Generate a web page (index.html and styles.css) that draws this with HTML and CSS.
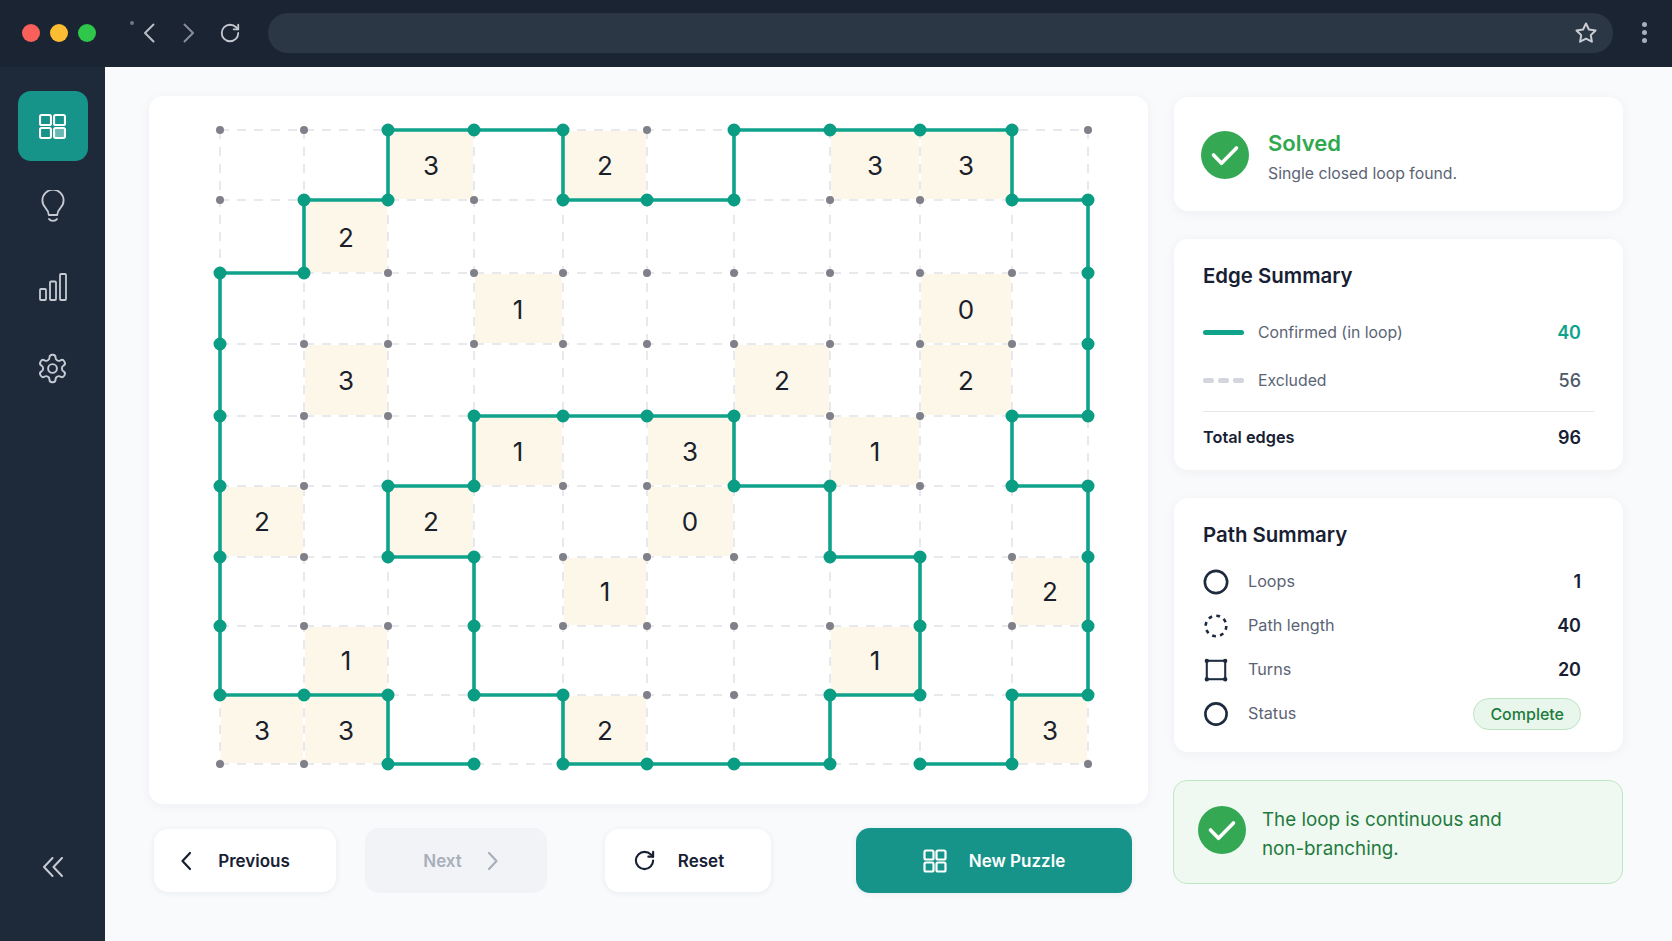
FILE: index.html
```html
<!DOCTYPE html>
<html lang="en">
<head>
    <meta charset="UTF-8">
    <meta name="viewport" content="width=device-width, initial-scale=1.0">
    <title>Loop Puzzle</title>
    <link rel="stylesheet" href="styles.css">
</head>
<body>
<div class="app">
    <!-- Browser chrome -->
    <header class="topbar">
        <div class="lights">
            <span class="light light-red"></span>
            <span class="light light-yellow"></span>
            <span class="light light-green"></span>
        </div>
        <span class="speck"></span>
        <svg class="chrome-icon chevron-back" viewBox="0 0 12 20"><path d="M10.5 1.5 2 10l8.5 8.5"/></svg>
        <svg class="chrome-icon chevron-forward" viewBox="0 0 12 20"><path d="M1.5 1.5 10 10l-8.5 8.5"/></svg>
        <svg class="chrome-icon reload" viewBox="0 0 24 24"><path d="M21 12a9 9 0 1 1-9-9c2.52 0 4.93 1 6.74 2.74L21 8"/><path d="M21 3v5h-5"/></svg>
        <div class="address">
            <svg class="chrome-icon star" viewBox="0 0 24 24"><path d="M12 2.5l2.95 6 6.6.95-4.78 4.65 1.13 6.57L12 17.57l-5.9 3.1 1.13-6.57L2.45 9.45l6.6-.95z"/></svg>
        </div>
        <div class="kebab"><span></span><span></span><span></span></div>
    </header>

    <div class="workspace">
        <!-- Side nav -->
        <nav class="sidebar">
            <a class="nav-item active">
                <svg viewBox="0 0 26 24" class="nav-grid">
                    <rect x="1" y="1" width="10.5" height="9.5" rx="1.5"/>
                    <rect x="14.5" y="1" width="10.5" height="9.5" rx="1.5"/>
                    <rect x="1" y="13.5" width="10.5" height="9.5" rx="1.5"/>
                    <rect x="14.5" y="13.5" width="10.5" height="9.5" rx="1.5" class="lit"/>
                </svg>
            </a>
            <a class="nav-item nav-bulb">
                <svg viewBox="0 0 24 33" class="nav-bulb-icon">
                    <path d="M7.8 25c0-3-1-4.6-3.3-7.2a10.6 10.6 0 1 1 15 0c-2.3 2.6-3.3 4.2-3.3 7.2z"/>
                    <path d="M8 29c1.5 2.4 6.5 2.4 8 0"/>
                </svg>
            </a>
            <a class="nav-item nav-bars">
                <svg viewBox="0 0 28 28" class="nav-bars-icon">
                    <rect x="1" y="16" width="6" height="11" rx="1"/>
                    <rect x="11" y="8.5" width="6" height="18.5" rx="1"/>
                    <rect x="21" y="1" width="6" height="26" rx="1"/>
                </svg>
            </a>
            <a class="nav-item nav-gear">
                <svg viewBox="0 0 24 24" class="nav-gear-icon">
                    <path d="M12.22 2h-.44a2 2 0 0 0-2 2v.18a2 2 0 0 1-1 1.73l-.43.25a2 2 0 0 1-2 0l-.15-.08a2 2 0 0 0-2.73.73l-.22.38a2 2 0 0 0 .73 2.73l.15.1a2 2 0 0 1 1 1.72v.51a2 2 0 0 1-1 1.74l-.15.09a2 2 0 0 0-.73 2.73l.22.38a2 2 0 0 0 2.73.73l.15-.08a2 2 0 0 1 2 0l.43.25a2 2 0 0 1 1 1.73V20a2 2 0 0 0 2 2h.44a2 2 0 0 0 2-2v-.18a2 2 0 0 1 1-1.73l.43-.25a2 2 0 0 1 2 0l.15.08a2 2 0 0 0 2.73-.73l.22-.39a2 2 0 0 0-.73-2.73l-.15-.08a2 2 0 0 1-1-1.74v-.5a2 2 0 0 1 1-1.74l.15-.09a2 2 0 0 0 .73-2.73l-.22-.38a2 2 0 0 0-2.73-.73l-.15.08a2 2 0 0 1-2 0l-.43-.25a2 2 0 0 1-1-1.73V4a2 2 0 0 0-2-2z"/>
                    <circle cx="12" cy="12" r="3.2"/>
                </svg>
            </a>
            <a class="collapse">
                <svg viewBox="0 0 22 20"><path d="M10.5 1 2 10l8.5 9"/><path d="M20 1l-8.5 9 8.5 9"/></svg>
            </a>
        </nav>

        <main class="main">
            <section class="play">
                <div class="card board">
                    <svg class="board-svg" viewBox="149 96 999 708">
                        <!-- clue cells -->
                        <g class="clue-cells">
                            <rect x="389" y="131" width="84" height="68"/><rect x="564" y="131" width="82" height="68"/><rect x="831" y="131" width="88" height="68"/><rect x="921" y="131" width="90" height="68"/>
                            <rect x="305" y="201" width="82" height="71"/>
                            <rect x="475" y="274" width="87" height="69"/><rect x="921" y="274" width="90" height="69"/>
                            <rect x="305" y="345" width="82" height="70"/><rect x="735" y="345" width="94" height="70"/><rect x="921" y="345" width="90" height="70"/>
                            <rect x="475" y="417" width="87" height="68"/><rect x="648" y="417" width="85" height="68"/><rect x="831" y="417" width="88" height="68"/>
                            <rect x="221" y="487" width="82" height="69"/><rect x="389" y="487" width="84" height="69"/><rect x="648" y="487" width="85" height="69"/>
                            <rect x="564" y="558" width="82" height="67"/><rect x="1013" y="558" width="74" height="67"/>
                            <rect x="305" y="627" width="82" height="67"/><rect x="831" y="627" width="88" height="67"/>
                            <rect x="221" y="696" width="82" height="67"/><rect x="305" y="696" width="82" height="67"/><rect x="564" y="696" width="82" height="67"/><rect x="1013" y="696" width="74" height="67"/>
                        </g>
                        <!-- excluded edges -->
                        <path class="edge-off" d="M220 130H1088M220 200H1088M220 273H1088M220 344H1088M220 416H1088M220 486H1088M220 557H1088M220 626H1088M220 695H1088M220 764H1088M220 130V764M304 130V764M388 130V764M474 130V764M563 130V764M647 130V764M734 130V764M830 130V764M920 130V764M1012 130V764M1088 130V764"/>
                        <!-- loop edges -->
                        <path class="edge-on" d="M388 130H563V200H734V130H1012V200H1088V416H1012V486H1088V695H1012V764H920"/>
                        <path class="edge-on" d="M830 764V695H920V557H830V486H734V416H474V486H388V557H474V695H563V764Z"/>
                        <path class="edge-on" d="M388 130V200H304V273H220V695H388V764H474"/>
                        <!-- vertices -->
                        <path class="dots-off" d="M220 130h.01M304 130h.01M647 130h.01M1088 130h.01
                            M220 200h.01M474 200h.01M830 200h.01M920 200h.01
                            M388 273h.01M474 273h.01M563 273h.01M647 273h.01M734 273h.01M830 273h.01M920 273h.01M1012 273h.01
                            M304 344h.01M388 344h.01M474 344h.01M563 344h.01M647 344h.01M734 344h.01M830 344h.01M920 344h.01M1012 344h.01
                            M304 416h.01M388 416h.01M830 416h.01M920 416h.01
                            M304 486h.01M563 486h.01M647 486h.01M920 486h.01
                            M304 557h.01M563 557h.01M647 557h.01M734 557h.01M1012 557h.01
                            M304 626h.01M388 626h.01M563 626h.01M647 626h.01M734 626h.01M830 626h.01M1012 626h.01
                            M647 695h.01M734 695h.01
                            M220 764h.01M304 764h.01M1088 764h.01"/>
                        <path class="dots-on" d="M388 130h.01M474 130h.01M563 130h.01M734 130h.01M830 130h.01M920 130h.01M1012 130h.01
                            M304 200h.01M388 200h.01M563 200h.01M647 200h.01M734 200h.01M1012 200h.01M1088 200h.01
                            M220 273h.01M304 273h.01M1088 273h.01
                            M220 344h.01M1088 344h.01
                            M220 416h.01M474 416h.01M563 416h.01M647 416h.01M734 416h.01M1012 416h.01M1088 416h.01
                            M220 486h.01M388 486h.01M474 486h.01M734 486h.01M830 486h.01M1012 486h.01M1088 486h.01
                            M220 557h.01M388 557h.01M474 557h.01M830 557h.01M920 557h.01M1088 557h.01
                            M220 626h.01M474 626h.01M920 626h.01M1088 626h.01
                            M220 695h.01M304 695h.01M388 695h.01M474 695h.01M563 695h.01M830 695h.01M920 695h.01M1012 695h.01M1088 695h.01
                            M388 764h.01M474 764h.01M563 764h.01M647 764h.01M734 764h.01M830 764h.01M920 764h.01M1012 764h.01"/>
                        <!-- clue numbers -->
                        <g class="clues">
                            <text x="431" y="175">3</text><text x="605" y="175">2</text><text x="875" y="175">3</text><text x="966" y="175">3</text>
                            <text x="346" y="247">2</text>
                            <text x="518" y="319">1</text><text x="966" y="319">0</text>
                            <text x="346" y="390">3</text><text x="782" y="390">2</text><text x="966" y="390">2</text>
                            <text x="518" y="461">1</text><text x="690" y="461">3</text><text x="875" y="461">1</text>
                            <text x="262" y="531">2</text><text x="431" y="531">2</text><text x="690" y="531">0</text>
                            <text x="605" y="601">1</text><text x="1050" y="601">2</text>
                            <text x="346" y="670">1</text><text x="875" y="670">1</text>
                            <text x="262" y="740">3</text><text x="346" y="740">3</text><text x="605" y="740">2</text><text x="1050" y="740">3</text>
                        </g>
                    </svg>
                </div>

                <div class="actions">
                    <button class="btn btn-prev">
                        <svg viewBox="0 0 12 20" class="btn-chevron"><path d="M10 2 2.5 10l7.5 8"/></svg>
                        Previous
                    </button>
                    <button class="btn btn-next" disabled>
                        Next
                        <svg viewBox="0 0 12 20" class="btn-chevron"><path d="M2 2l7.5 8-7.5 8"/></svg>
                    </button>
                    <button class="btn btn-reset">
                        <svg viewBox="0 0 24 24" class="btn-reload"><path d="M21 12a9 9 0 1 1-9-9c2.52 0 4.93 1 6.74 2.74L21 8"/><path d="M21 3v5h-5"/></svg>
                        Reset
                    </button>
                    <button class="btn btn-new">
                        <svg viewBox="0 0 24 24" class="btn-grid">
                            <rect x="1.5" y="1.5" width="9" height="9" rx="1.5"/>
                            <rect x="13.5" y="1.5" width="9" height="9" rx="1.5"/>
                            <rect x="1.5" y="13.5" width="9" height="9" rx="1.5"/>
                            <rect x="13.5" y="13.5" width="9" height="9" rx="1.5"/>
                        </svg>
                        New Puzzle
                    </button>
                </div>
            </section>

            <aside class="side">
                <div class="card solved">
                    <svg class="check" viewBox="0 0 48 48"><circle cx="24" cy="24" r="24"/><path d="M12.5 24l8 8.3L35.5 17"/></svg>
                    <div class="solved-text">
                        <div class="solved-title">Solved</div>
                        <div class="solved-sub">Single closed loop found.</div>
                    </div>
                </div>

                <div class="card summary edge-summary">
                    <h2>Edge Summary</h2>
                    <div class="edge-row">
                        <span class="legend legend-on"></span>
                        <span class="edge-label">Confirmed (in loop)</span>
                        <span class="edge-value teal">40</span>
                    </div>
                    <div class="edge-row">
                        <span class="legend legend-off"><i></i><i></i><i></i></span>
                        <span class="edge-label">Excluded</span>
                        <span class="edge-value">56</span>
                    </div>
                    <div class="total-row">
                        <span>Total edges</span>
                        <span class="total-value">96</span>
                    </div>
                </div>

                <div class="card summary path-summary">
                    <h2>Path Summary</h2>
                    <div class="path-row">
                        <svg class="path-icon" viewBox="0 0 24 24"><circle cx="12" cy="12" r="10.3"/></svg>
                        <span class="path-label">Loops</span>
                        <span class="path-value">1</span>
                    </div>
                    <div class="path-row">
                        <svg class="path-icon" viewBox="0 0 24 24"><circle class="dashed" cx="12" cy="12" r="9.5"/></svg>
                        <span class="path-label">Path length</span>
                        <span class="path-value">40</span>
                    </div>
                    <div class="path-row">
                        <svg class="path-icon" viewBox="0 0 24 24">
                            <rect class="turns" x="3.5" y="3.5" width="17" height="17"/>
                            <path class="corners" d="M3.5 3.5h.01M20.5 3.5h.01M3.5 20.5h.01M20.5 20.5h.01"/>
                        </svg>
                        <span class="path-label">Turns</span>
                        <span class="path-value">20</span>
                    </div>
                    <div class="path-row">
                        <svg class="path-icon" viewBox="0 0 24 24"><circle cx="12" cy="12" r="9.8"/></svg>
                        <span class="path-label">Status</span>
                        <span class="pill">Complete</span>
                    </div>
                </div>

                <div class="note">
                    <svg class="check" viewBox="0 0 48 48"><circle cx="24" cy="24" r="24"/><path d="M12.5 24l8 8.3L35.5 17"/></svg>
                    <p>The loop is continuous and<br>non-branching.</p>
                </div>
            </aside>
        </main>
    </div>
</div>
</body>
</html>
```

FILE: styles.css
```css
* {
    box-sizing: border-box;
}

body {
    margin: 0;
    font-family: Inter, "Noto Sans", sans-serif;
    background: #f8fafc;
    color: #172033;
    overflow: hidden;
}

.app {
    display: grid;
    grid-template-rows: 67px 1fr;
    height: 100vh;
}

/* Browser chrome */
.topbar {
    display: flex;
    align-items: center;
    background: #1a2433;
    padding: 0 0 2px 22px;
}

.lights {
    display: flex;
    gap: 10px;
}

.light {
    width: 18px;
    height: 18px;
    border-radius: 50%;
}

.light-red { background: #f9605a; }
.light-yellow { background: #fdbd33; }
.light-green { background: #2fc74a; }

.speck {
    width: 4px;
    height: 4px;
    border-radius: 50%;
    background: #6f7682;
    margin: -20px 0 0 34px;
}

.chrome-icon {
    fill: none;
    stroke-width: 2;
    stroke-linecap: round;
    stroke-linejoin: round;
    flex: none;
}

.chevron-back {
    width: 12px;
    height: 20px;
    stroke: #b9bec6;
    margin-left: 9px;
}

.chevron-forward {
    width: 12px;
    height: 20px;
    stroke: #878e99;
    margin-left: 28px;
}

.reload {
    width: 22px;
    height: 22px;
    stroke: #c4c8ce;
    margin-left: 24px;
}

.address {
    display: flex;
    align-items: center;
    justify-content: flex-end;
    width: 1345px;
    height: 40px;
    margin-left: 27px;
    padding-right: 15px;
    border-radius: 20px;
    background: #2c3746;
}

.star {
    width: 24px;
    height: 24px;
    stroke: #c9ccd2;
}

.kebab {
    display: flex;
    flex-direction: column;
    gap: 3px;
    margin-left: 29px;
}

.kebab span {
    width: 5px;
    height: 5px;
    border-radius: 50%;
    background: #a9afba;
}

.workspace {
    display: flex;
    min-height: 0;
}

/* Side nav */
.sidebar {
    width: 105px;
    flex: none;
    display: flex;
    flex-direction: column;
    align-items: center;
    padding: 24px 0 0;
    background: #1e2a3a;
}

.nav-item {
    width: 70px;
    height: 70px;
    display: flex;
    align-items: center;
    justify-content: center;
    border-radius: 13px;
}

.nav-item svg {
    fill: none;
    stroke: #c5cad3;
    stroke-width: 1.8;
    stroke-linejoin: round;
    stroke-linecap: round;
}

.nav-item.active {
    background: #17948a;
}

.nav-item.active svg {
    stroke: #ffffff;
    stroke-width: 2;
}

.nav-grid {
    width: 27px;
    height: 25px;
}

.nav-grid .lit {
    fill: rgba(255, 255, 255, 0.35);
}

.nav-bulb { margin-top: 10px; }
.nav-bars { margin-top: 11px; }
.nav-gear { margin-top: 11px; }

.nav-bulb-icon {
    width: 24px;
    height: 33px;
}

.nav-bars-icon {
    width: 28px;
    height: 28px;
}

.nav-item .nav-gear-icon {
    width: 33px;
    height: 33px;
    stroke-width: 1.4;
}

.collapse {
    margin-top: auto;
    margin-bottom: 64px;
    display: flex;
}

.collapse svg {
    width: 22px;
    height: 20px;
    fill: none;
    stroke: #c5cad3;
    stroke-width: 2;
    stroke-linecap: round;
    stroke-linejoin: round;
}

/* Main area */
.main {
    flex: 1;
    display: flex;
    gap: 26px;
    padding: 29px 0 0 44px;
}

.card {
    background: #ffffff;
    border-radius: 14px;
    box-shadow: 0 2px 12px rgba(30, 41, 59, 0.05);
}

.play {
    width: 999px;
    flex: none;
}

.board {
    height: 708px;
}

.board-svg {
    display: block;
    width: 999px;
    height: 708px;
}

.clue-cells rect {
    fill: #fdf7ea;
}

.edge-off {
    fill: none;
    stroke: #e0e2e7;
    stroke-width: 1.5;
    stroke-dasharray: 9 8;
}

.edge-on {
    fill: none;
    stroke: #0fa38b;
    stroke-width: 3.6;
    stroke-linejoin: round;
}

.dots-off {
    stroke: #7f8089;
    stroke-width: 8;
    stroke-linecap: round;
}

.dots-on {
    stroke: #0b9c84;
    stroke-width: 13;
    stroke-linecap: round;
}

.clues text {
    font-size: 26px;
    fill: #1a1f2b;
    text-anchor: middle;
}

/* Buttons under the board */
.actions {
    display: flex;
    align-items: center;
    margin-top: 24px;
    padding-left: 5px;
}

.btn {
    display: flex;
    align-items: center;
    justify-content: center;
    height: 63px;
    border: none;
    border-radius: 14px;
    background: #ffffff;
    color: #172033;
    font-family: inherit;
    font-size: 17px;
    font-weight: 600;
    box-shadow: 0 1px 6px rgba(30, 41, 59, 0.07);
}

.btn svg {
    fill: none;
    stroke: currentColor;
    stroke-width: 2.2;
    stroke-linecap: round;
    stroke-linejoin: round;
    flex: none;
}

.btn-chevron {
    width: 12px;
    height: 20px;
}

.btn-prev {
    width: 182px;
    gap: 26px;
    padding-right: 26px;
}

.btn-next {
    width: 182px;
    height: 65px;
    margin-left: 29px;
    gap: 25px;
    padding-left: 16px;
    background: #f2f3f6;
    color: #a8afbc;
    box-shadow: none;
}

.btn-reset {
    width: 166px;
    margin-left: 58px;
    gap: 22px;
    padding-right: 25px;
}

.btn-reload {
    width: 23px;
    height: 23px;
}

.btn-new {
    width: 276px;
    height: 65px;
    margin-left: 85px;
    gap: 22px;
    background: #17948a;
    color: #ffffff;
    font-size: 17px;
}

.btn-grid {
    width: 24px;
    height: 24px;
}

/* Right column */
.side {
    width: 449px;
    flex: none;
    display: flex;
    flex-direction: column;
    gap: 28px;
    padding-top: 1px;
}

.solved {
    display: flex;
    align-items: center;
    gap: 19px;
    height: 114px;
    padding-left: 27px;
}

.check {
    width: 48px;
    height: 48px;
    flex: none;
}

.check circle {
    fill: #34a853;
}

.check path {
    fill: none;
    stroke: #ffffff;
    stroke-width: 3.6;
    stroke-linecap: round;
    stroke-linejoin: round;
}

.solved .check {
    margin-top: 2px;
}

.solved-text {
    margin-top: 6px;
}

.solved-title {
    font-size: 22px;
    font-weight: 600;
    line-height: 28px;
    color: #2fa84f;
}

.solved-sub {
    margin-top: 6px;
    font-size: 15.8px;
    line-height: 22px;
    color: #5b6475;
}

.summary {
    padding: 0 29px;
}

.summary h2 {
    margin: 0;
    font-size: 20.4px;
    font-weight: 600;
    line-height: 24px;
    color: #172033;
}

.edge-summary {
    padding-top: 25px;
    padding-bottom: 8px;
}

.edge-summary h2 {
    margin-bottom: 20px;
}

.edge-row {
    display: flex;
    align-items: center;
    height: 48px;
    padding-right: 13px;
}

.legend {
    display: flex;
    justify-content: space-between;
    width: 41px;
    height: 5px;
    flex: none;
}

.legend-on {
    background: #0fa38b;
    border-radius: 3px;
}

.legend-off i {
    width: 11px;
    height: 5px;
    border-radius: 2px;
    background: #d3d6dc;
}

.edge-label {
    margin-left: 14px;
    font-size: 15.8px;
    color: #5b6475;
}

.edge-value {
    margin-left: auto;
    font-size: 18px;
    font-weight: 500;
    color: #4f5a6b;
}

.edge-value.teal {
    color: #0fa38b;
    font-weight: 600;
}

.total-row {
    display: flex;
    align-items: center;
    justify-content: space-between;
    height: 51px;
    margin-top: 7px;
    padding-right: 13px;
    border-top: 1px solid #e4e7ec;
    font-size: 16.3px;
    font-weight: 600;
}

.total-value {
    font-size: 18px;
}

.path-summary {
    padding-top: 25px;
    padding-bottom: 16px;
}

.path-summary h2 {
    margin-bottom: 12.5px;
}

.path-row {
    display: flex;
    align-items: center;
    height: 44px;
    padding-right: 13px;
}

.path-icon {
    width: 26px;
    height: 26px;
    flex: none;
    fill: none;
    stroke: #1d2b3e;
    stroke-width: 2.4;
}

.path-icon .dashed {
    stroke-dasharray: 3.5 3.96;
}

.path-icon .turns {
    stroke-width: 1.9;
}

.path-icon .corners {
    stroke-width: 4;
    stroke-linecap: round;
}

.path-label {
    margin: -2px 0 0 19px;
    font-size: 16.2px;
    color: #5b6475;
}

.path-value {
    margin-left: auto;
    font-size: 18px;
    font-weight: 600;
}

.pill {
    margin-left: auto;
    display: flex;
    align-items: center;
    height: 32px;
    padding: 0 16px;
    border: 1.5px solid #bde4c5;
    border-radius: 16px;
    background: #e9f6ec;
    color: #1f7a3d;
    font-size: 16px;
    font-weight: 500;
}

.note {
    display: flex;
    align-items: center;
    gap: 16px;
    width: 450px;
    height: 104px;
    margin-left: -1px;
    padding-left: 24px;
    border: 1.5px solid #bfe6c5;
    border-radius: 14px;
    background: #eff9f1;
}

.note .check {
    margin-top: -4px;
}

.note p {
    margin: 5px 0 0;
    font-size: 18.8px;
    line-height: 29.5px;
    color: #1f7a3d;
}
```
